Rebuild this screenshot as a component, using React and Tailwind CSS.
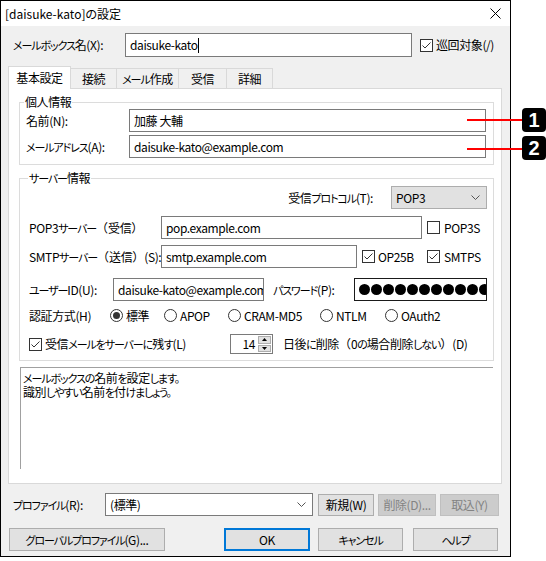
import React from "react";

const F = "font-['Noto_Sans_CJK_JP',sans-serif] [font-feature-settings:'palt']";

function J({ children }) {
  const s = String(children);
  const parts = s.split(/([\u3040-\u30ff\u3001\u3002]+|[\uff08\uff09])/);
  return (
    <>
      {parts.map((p, i) =>
        p === "" ? null : /[\uff08\uff09]/.test(p) ? (
          <span key={i} className="[font-feature-settings:normal] tracking-normal">{p}</span>
        ) : /[\u3040-\u30ff\u3001\u3002]/.test(p) ? (
          <span key={i} className="text-[11px] tracking-[-1.1px]">{p}</span>
        ) : (
          <span key={i}>{p}</span>
        )
      )}
    </>
  );
}

function Check({ checked }) {
  return (
    <span className="w-[13px] h-[13px] border border-[#333333] bg-white flex items-center justify-center shrink-0">
      {checked && (
        <svg width="11" height="11" viewBox="0 0 11 11">
          <polyline points="1.5,5.5 4,8 9.5,2.5" fill="none" stroke="#333333" strokeWidth="1" />
        </svg>
      )}
    </span>
  );
}

function Radio({ checked }) {
  return (
    <span className="w-[13px] h-[13px] rounded-full border border-[#333333] bg-white flex items-center justify-center shrink-0">
      {checked && <span className="w-[7px] h-[7px] rounded-full bg-[#333333]" />}
    </span>
  );
}

function Chevron() {
  return (
    <svg width="9" height="6" viewBox="0 0 9 6">
      <polyline points="0.5,0.5 4.5,4.5 8.5,0.5" fill="none" stroke="#555555" strokeWidth="1" />
    </svg>
  );
}

function Input({ w, children, className = "" }) {
  return (
    <div className={`h-full border border-[#7a7a7a] bg-white flex items-center pl-[4px] overflow-hidden whitespace-nowrap shrink-0 ${w} ${className}`}>
      {children}
    </div>
  );
}

function Btn({ w, children, disabled }) {
  return (
    <div
      className={`h-[22px] flex items-center justify-center shrink-0 border ${w} ${
        disabled ? "bg-[#cccccc] border-[#bfbfbf] text-[#838383]" : "bg-[#e1e1e1] border-[#adadad]"
      }`}
    >
      {children}
    </div>
  );
}

export default function App() {
  return (
    <div className={`relative w-[546px] h-[561px] bg-white text-[12px] leading-[14px] tracking-[-0.4px] text-black whitespace-nowrap ${F}`}>
      <div className="w-[511px] h-[557px] border border-black bg-[#f0f0f0] flex flex-col">
        {/* title bar */}
        <div className="h-[25px] bg-white flex items-center justify-between pl-[4px] pr-[9px] shrink-0">
          <span className="text-[12px] tracking-normal">[daisuke-kato]の設定</span>
          <svg width="11" height="11" viewBox="0 0 11 11">
            <line x1="0.5" y1="0.5" x2="10.5" y2="10.5" stroke="#000" strokeWidth="1" />
            <line x1="10.5" y1="0.5" x2="0.5" y2="10.5" stroke="#000" strokeWidth="1" />
          </svg>
        </div>

        {/* mailbox name row */}
        <div className="mt-[7px] h-[24px] flex items-center pl-[12px]">
          <span className="w-[112px] shrink-0"><J>メールボックス名(X):</J></span>
          <Input w="w-[287px]">
            <span>daisuke-kato</span>
            <span className="w-[1px] h-[15px] bg-black" />
          </Input>
          <div className="ml-[8px] flex items-center gap-[3px]">
            <Check checked />
            <span>巡回対象(/)</span>
          </div>
        </div>

        {/* tabs */}
        <div className="mt-[9px] ml-[7px] h-[22px] flex items-end">
          <div className="relative z-10 w-[63px] h-[23px] -mb-[1px] bg-white border border-b-0 border-[#d9d9d9] flex items-center justify-center pb-[1px]">
            基本設定
          </div>
          {[
            ["接続", "w-[46px]"],
            ["メール作成", "w-[62px]"],
            ["受信", "w-[48px]"],
            ["詳細", "w-[46px]"],
          ].map(([t, w]) => (
            <div key={t} className={`${w} h-[20px] border-t border-r border-[#d9d9d9] flex items-center justify-center`}>
              <J>{t}</J>
            </div>
          ))}
        </div>

        {/* panel */}
        <div className="ml-[7px] w-[494px] h-[396px] bg-white border border-[#d9d9d9] pl-[10px] pt-[6px] flex flex-col">
          {/* 個人情報 */}
          <fieldset className="w-[475px] border border-[#dcdcdc] pl-[6px] pr-[6px] pb-[6px]">
            <legend className="-ml-[2px] px-[1px] leading-[14px]">個人情報</legend>
            <div className="h-[23px] flex items-center">
              <span className="w-[103px] shrink-0">名前(N):</span>
              <Input w="w-[357px]">加藤 大輔</Input>
            </div>
            <div className="mt-[3px] h-[23px] flex items-center">
              <span className="w-[103px] shrink-0"><J>メールアドレス(A):</J></span>
              <Input w="w-[357px]">daisuke-kato@example.com</Input>
            </div>
          </fieldset>

          {/* サーバー情報 */}
          <fieldset className="mt-[6px] w-[475px] border border-[#dcdcdc] pl-[9px] pr-[6px] pb-[6px]">
            <legend className="-ml-[1px] px-[1px] leading-[14px]"><J>サーバー情報</J></legend>
            <div className="mt-[1px] h-[23px] flex items-center justify-end">
              <span className="mr-[18px]"><J>受信プロトコル(T):</J></span>
              <div className="w-[96px] h-full bg-[#e1e1e1] border border-[#adadad] flex items-center justify-between pl-[4px] pr-[6px]">
                <span>POP3</span>
                <Chevron />
              </div>
            </div>
            <div className="mt-[7px] h-[23px] flex items-center">
              <span className="w-[132px] shrink-0"><J>POP3サーバー（受信）</J></span>
              <Input w="w-[261px]">pop.example.com</Input>
              <div className="ml-[5px] flex items-center gap-[4px]">
                <Check />
                <span>POP3S</span>
              </div>
            </div>
            <div className="mt-[6px] h-[23px] flex items-center">
              <span className="w-[132px] shrink-0"><J>SMTPサーバー（送信）(S):</J></span>
              <Input w="w-[196px]">smtp.example.com</Input>
              <div className="ml-[5px] w-[65px] flex items-center gap-[3px]">
                <Check checked />
                <span>OP25B</span>
              </div>
              <div className="flex items-center gap-[4px]">
                <Check checked />
                <span>SMTPS</span>
              </div>
            </div>
            <div className="mt-[10px] h-[23px] flex items-center">
              <span className="w-[84px] shrink-0"><J>ユーザーID(U):</J></span>
              <Input w="w-[151px]">daisuke-kato@example.com</Input>
              <span className="ml-[9px]"><J>パスワード(P):</J></span>
              <div className="ml-auto w-[133px] h-full border border-[#1a1a1a] bg-white flex items-center gap-[1px] pl-[4px] overflow-hidden">
                {Array.from({ length: 13 }).map((_, i) => (
                  <span key={i} className="w-[11px] h-[11px] rounded-full bg-black shrink-0" />
                ))}
              </div>
            </div>
            <div className="mt-[8px] h-[13px] flex items-center">
              <span className="w-[81px] shrink-0">認証方式(H)</span>
              {[
                ["標準", "w-[54px]", true],
                ["APOP", "w-[64px]", false],
                ["CRAM-MD5", "w-[92px]", false],
                ["NTLM", "w-[65px]", false],
                ["OAuth2", "", false],
              ].map(([t, w, c]) => (
                <div key={t} className={`${w} flex items-center gap-[3px] shrink-0`}>
                  <Radio checked={c} />
                  <span>{t}</span>
                </div>
              ))}
            </div>
            <div className="mt-[12px] h-[20px] flex items-center">
              <div className="w-[201px] flex items-center gap-[3px] shrink-0">
                <Check checked />
                <span><J>受信メールをサーバーに残す(L)</J></span>
              </div>
              <div className="w-[43px] h-full border border-[#7a7a7a] bg-white flex items-center">
                <span className="flex-1 text-right pr-[2px]">14</span>
                <div className="w-[15px] h-full flex flex-col gap-[1px] p-[1px]">
                  <div className="flex-1 bg-[#e1e1e1] border border-[#adadad] flex items-center justify-center">
                    <svg width="5" height="3" viewBox="0 0 5 3"><polygon points="0,3 5,3 2.5,0" fill="#000" /></svg>
                  </div>
                  <div className="flex-1 bg-[#e1e1e1] border border-[#adadad] flex items-center justify-center">
                    <svg width="5" height="3" viewBox="0 0 5 3"><polygon points="0,0 5,0 2.5,3" fill="#000" /></svg>
                  </div>
                </div>
              </div>
              <span className="ml-[10px]"><J>日後に削除（0の場合削除しない）(D)</J></span>
            </div>
          </fieldset>

          {/* description */}
          <div className="mt-[6px] ml-[1px] w-[473px] h-[102px] border-t border-l border-[#a0a0a0] pl-[2px] pt-[3px] leading-[14px]">
            <div><J>メールボックスの名前を設定します。</J></div>
            <div><J>識別しやすい名前を付けましょう。</J></div>
          </div>
        </div>

        {/* profile row */}
        <div className="mt-[9px] h-[23px] flex items-center pl-[12px]">
          <span className="w-[92px] shrink-0"><J>プロファイル(R):</J></span>
          <div className="w-[208px] h-full border border-[#7a7a7a] bg-white flex items-center justify-between pl-[4px] pr-[6px] shrink-0">
            <span>(標準)</span>
            <Chevron />
          </div>
          <div className="ml-[5px]"><Btn w="w-[56px]">新規(W)</Btn></div>
          <div className="ml-[4px]"><Btn w="w-[58px]" disabled>削除(D)...</Btn></div>
          <div className="ml-[4px]"><Btn w="w-[59px]" disabled>取込(Y)</Btn></div>
        </div>

        {/* buttons row */}
        <div className="mt-[12px] h-[23px] flex items-center">
          <div className="ml-[8px] w-[156px] h-full bg-[#e1e1e1] border border-[#adadad] flex items-center justify-center"><J>グローバルプロファイル(G)...</J></div>
          <div className="ml-[59px] w-[86px] h-full bg-[#e1e1e1] border-2 border-[#0078d7] flex items-center justify-center">OK</div>
          <div className="ml-[8px] w-[85px] h-full bg-[#e1e1e1] border border-[#adadad] flex items-center justify-center"><J>キャンセル</J></div>
          <div className="ml-[10px] w-[85px] h-full bg-[#e1e1e1] border border-[#adadad] flex items-center justify-center"><J>ヘルプ</J></div>
        </div>
      </div>

      {/* annotations */}
      <div className="absolute left-[467px] top-[119px] w-[56px] h-[2px] bg-[#ff0000]" />
      <div className="absolute left-[467px] top-[148px] w-[56px] h-[2px] bg-[#ff0000]" />
      <div className="absolute left-[522px] top-[108px] w-[24px] h-[24px] rounded-[4px] bg-black text-white flex items-center justify-center text-[20px] leading-none font-bold tracking-normal font-['Liberation_Sans',sans-serif]">1</div>
      <div className="absolute left-[522px] top-[136px] w-[24px] h-[24px] rounded-[4px] bg-black text-white flex items-center justify-center text-[20px] leading-none font-bold tracking-normal font-['Liberation_Sans',sans-serif]">2</div>
    </div>
  );
}
